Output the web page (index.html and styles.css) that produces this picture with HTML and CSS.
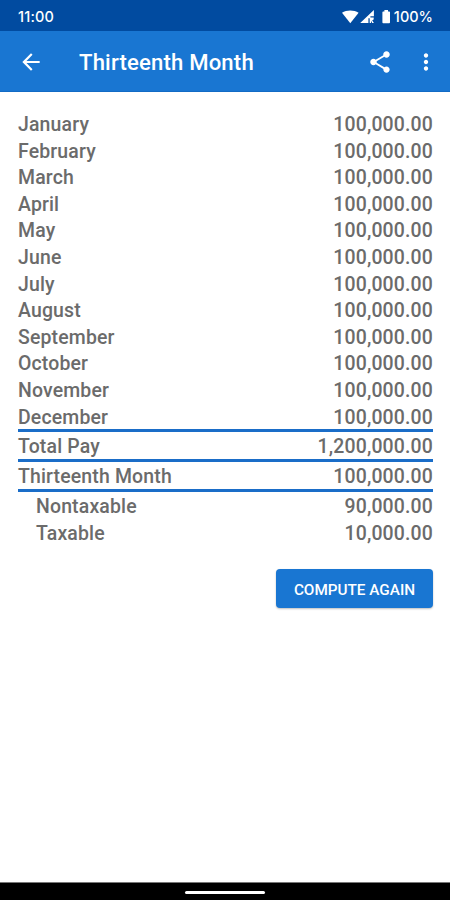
FILE: index.html
```html
<!DOCTYPE html>
<html lang="en">
<head>
    <meta charset="UTF-8">
    <title>Thirteenth Month</title>
    <link rel="stylesheet" href="styles.css">
</head>
<body>
    <div class="status">
        <span class="time">11:00</span>
        <svg class="signals" width="50" height="16" viewBox="0 0 50 16">
            <path d="M0 3.8C4.5 0.6 12 0.6 16.6 3.8L8.3 14.2Z"/>
            <path d="M31.9 1V7.2H28.4V9.2H26.4V14H18.2Z"/>
            <path d="M27.7 8.5H31.7V10.6L30.2 11.2L31.9 14H30.2L29 11.7V14H27.7Z"/>
            <path d="M42.4 1H46V2.4H47.2Q48 2.4 48 3.2V13.3Q48 14.2 47.2 14.2H41.2Q40.4 14.2 40.4 13.3V3.2Q40.4 2.4 41.2 2.4H42.4Z"/>
        </svg>
        <span class="percent">100%</span>
    </div>
    <header class="bar">
        <svg class="back" width="26" height="26" viewBox="0 0 24 24"><path d="M20 11H7.83l5.59-5.59L12 4l-8 8 8 8 1.41-1.41L7.83 13H20v-2z"/></svg>
        <h1>Thirteenth Month</h1>
        <svg class="share" width="26" height="26" viewBox="0 0 24 24"><path d="M18 16.08c-.76 0-1.44.3-1.96.77L8.91 12.7c.05-.23.09-.46.09-.7s-.04-.47-.09-.7l7.05-4.11c.54.5 1.25.81 2.04.81 1.66 0 3-1.34 3-3s-1.34-3-3-3-3 1.34-3 3c0 .24.04.47.09.7L8.04 9.81C7.5 9.31 6.79 9 6 9c-1.66 0-3 1.34-3 3s1.34 3 3 3c.79 0 1.5-.31 2.04-.81l7.12 4.16c-.05.21-.08.43-.08.65 0 1.61 1.31 2.92 2.92 2.92s2.92-1.31 2.92-2.92-1.31-2.92-2.92-2.92z"/></svg>
        <svg class="more" width="26" height="26" viewBox="0 0 24 24"><path d="M12 8c1.1 0 2-.9 2-2s-.9-2-2-2-2 .9-2 2 .9 2 2 2zm0 2c-1.1 0-2 .9-2 2s.9 2 2 2 2-.9 2-2-.9-2-2-2zm0 6c-1.1 0-2 .9-2 2s.9 2 2 2 2-.9 2-2-.9-2-2-2z"/></svg>
    </header>
    <main>
        <div class="row"><span>January</span><span>100,000.00</span></div>
        <div class="row"><span>February</span><span>100,000.00</span></div>
        <div class="row"><span>March</span><span>100,000.00</span></div>
        <div class="row"><span>April</span><span>100,000.00</span></div>
        <div class="row"><span>May</span><span>100,000.00</span></div>
        <div class="row"><span>June</span><span>100,000.00</span></div>
        <div class="row"><span>July</span><span>100,000.00</span></div>
        <div class="row"><span>August</span><span>100,000.00</span></div>
        <div class="row"><span>September</span><span>100,000.00</span></div>
        <div class="row"><span>October</span><span>100,000.00</span></div>
        <div class="row"><span>November</span><span>100,000.00</span></div>
        <div class="row"><span>December</span><span>100,000.00</span></div>
        <div class="row total"><span>Total Pay</span><span>1,200,000.00</span></div>
        <div class="row total last"><span>Thirteenth Month</span><span>100,000.00</span></div>
        <div class="row sub"><span>Nontaxable</span><span>90,000.00</span></div>
        <div class="row sub"><span>Taxable</span><span>10,000.00</span></div>
        <button class="again">COMPUTE AGAIN</button>
    </main>
    <footer class="nav"><div class="pill"></div></footer>
</body>
</html>
```

FILE: styles.css
```css
*{
    box-sizing: border-box;
    margin: 0;
    padding: 0;
}
body{
    display: flex;
    flex-direction: column;
    height: 900px;
    background-color: #fff;
    font-family: Roboto, sans-serif;
    font-weight: 500;
    overflow: hidden;
}
svg{
    display: block;
    flex: none;
    fill: #fff;
}
.status{
    display: flex;
    align-items: center;
    height: 31px;
    padding: 2px 17px 0 18px;
    background-color: #014ba0;
    color: #fff;
    font: 550 14.5px Inter, sans-serif;
}
.time{
    letter-spacing: 0.2px;
}
.signals{
    margin-left: auto;
}
.percent{
    margin-left: 2px;
}
.bar{
    display: flex;
    align-items: center;
    height: 61px;
    padding: 1px 11px 0 18px;
    background-color: #1976d2;
    border-bottom: 1px solid #126bc5;
    color: #fff;
}
.bar h1{
    margin-left: 35px;
    padding-top: 1px;
    font-size: 22.1px;
    font-weight: 500;
    letter-spacing: 0.18px;
}
.share{
    margin-left: auto;
}
.more{
    margin-left: 20px;
}
main{
    flex: 1;
    display: flex;
    flex-direction: column;
    padding: 18px 17px 0 18px;
}
.row{
    display: flex;
    flex: none;
    justify-content: space-between;
    height: 26.6px;
    line-height: 29.4px;
    color: #6b6b6b;
    font-size: 19.45px;
    letter-spacing: 0.16px;
}
.total{
    height: 30px;
    line-height: 29px;
    border-top: 3px solid #1a6dc8;
}
.last{
    height: 33px;
    border-bottom: 3px solid #1a6dc8;
}
.sub{
    padding-left: 18px;
}
.again{
    align-self: flex-end;
    width: 157px;
    height: 39px;
    margin-top: 24px;
    padding-top: 2px;
    border: none;
    border-radius: 4px;
    background-color: #1976d2;
    box-shadow: 0 1px 2px rgba(0, 0, 0, .25);
    color: #fff;
    font: 500 15.3px Roboto, sans-serif;
}
.nav{
    height: 18px;
    padding-top: 8px;
    background-color: #000;
    border-top: 1px solid #777;
}
.pill{
    width: 80px;
    height: 3px;
    margin: 0 auto;
    border-radius: 2px;
    background-color: #fff;
}
```
